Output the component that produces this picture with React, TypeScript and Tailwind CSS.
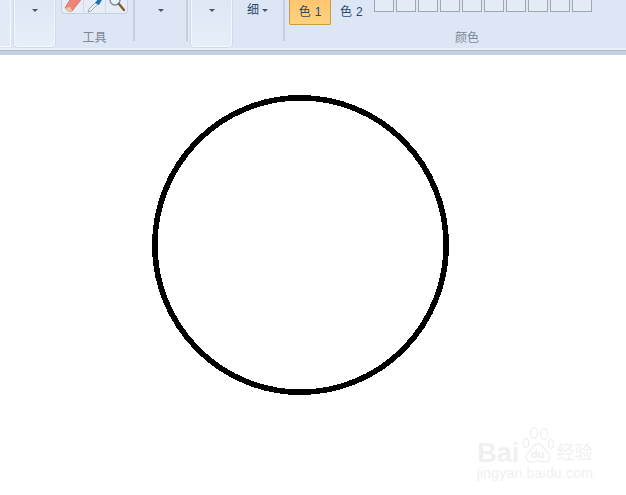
const swatches = [0, 1, 2, 3, 4, 5, 6, 7, 8, 9];

function Arrow() {
  return <span className="block h-0 w-0 border-x-[3px] border-t-[3px] border-x-transparent border-t-[#47566d]" />;
}

// big dropdown button, cut off by the top of the picture
function BigButton({ className }: { className: string }) {
  return (
    <div className={`flex h-[47px] shrink-0 justify-center rounded-b-sm border-x border-b border-[#f4f7fb] bg-gradient-to-b from-[#dde7f4] to-[#e6eef8] pt-[9px] shadow-[0_0_0_1px_#cfdaea] ${className}`}>
      <Arrow />
    </div>
  );
}

function Separator({ className }: { className: string }) {
  return <div className={`h-[41px] w-[2px] shrink-0 bg-[#c3cfdf] ${className}`} />;
}

function Eraser() {
  return (
    <svg width="18" height="13" viewBox="0 0 18 13" className="block">
      <path d="M1 8 L7 -2 L18 -2 L16 1 L8 11 L4 11 Z" fill="#f0837a" stroke="#c9695f" strokeWidth="0.8" />
      <path d="M1 8 L4 11 L8 11 L6 7 Z" fill="#f7c6a8" />
    </svg>
  );
}

function Dropper() {
  return (
    <svg width="18" height="13" viewBox="0 0 18 13" className="block">
      <path d="M2 12 L3 9 L10 2 L12 4 L5 11 Z" fill="#eef3f8" stroke="#8b97a5" strokeWidth="0.8" />
      <path d="M9 3 L13 -2 L17 -2 L13 5 Z" fill="#1f6fc0" />
    </svg>
  );
}

function Magnifier() {
  return (
    <svg width="18" height="13" viewBox="0 0 18 13" className="block">
      <circle cx="7" cy="0" r="5" fill="#e8f0f8" stroke="#7d8a99" strokeWidth="1.4" />
      <path d="M11 4 L16 10" stroke="#8a5a2b" strokeWidth="2.4" strokeLinecap="round" />
    </svg>
  );
}

function ToolsGroup() {
  return (
    <div className="ml-[6px] flex h-[48px] w-[67px] shrink-0 flex-col items-center">
      <div className="flex h-[14px] w-full rounded-b-sm border-x border-b border-[#c5d1e1] bg-[#e6edf7]">
        <div className="flex flex-1 justify-center border-r border-[#cfd9e7]"><Eraser /></div>
        <div className="flex flex-1 justify-center border-r border-[#cfd9e7]"><Dropper /></div>
        <div className="flex flex-1 justify-center"><Magnifier /></div>
      </div>
      <span className="mt-[17px] text-[12px] leading-[14px] text-[#7c8796]">工具</span>
    </div>
  );
}

function Ribbon() {
  return (
    <div className="flex h-[48px] shrink-0 items-start overflow-hidden bg-[#dce6f4] text-[12px] leading-[14px]">
      <div className="h-[47px] w-[11px] shrink-0 border-r border-b border-[#f4f7fb] bg-[#e1eaf6]" />
      <BigButton className="ml-[3px] w-[41px]" />
      <ToolsGroup />
      <Separator className="ml-[5px]" />
      <div className="flex w-[51px] shrink-0 justify-center pt-[9px]"><Arrow /></div>
      <Separator />
      <BigButton className="ml-[3px] w-[41px]" />
      <div className="ml-[15px] flex w-[25px] shrink-0 items-center gap-[3px] pt-[3px] text-[#2b4a6e]">
        <span>细</span>
        <Arrow />
      </div>
      <Separator className="ml-[11px]" />
      <div className="ml-[4px] flex h-[25px] w-[42px] shrink-0 items-center justify-center gap-[4px] rounded-b-[2px] border-x border-b border-[#c99a3c] bg-gradient-to-b from-[#ffc56e] to-[#ffd27e] pb-[1px] text-[#2b4a6e]">
        <span>色</span>
        <span>1</span>
      </div>
      <div className="ml-[9px] flex h-[25px] w-[24px] shrink-0 items-center gap-[4px] pb-[1px] text-[#2b4a6e]">
        <span>色</span>
        <span>2</span>
      </div>
      <div className="ml-[10px] flex w-[218px] shrink-0 flex-col">
        <div className="flex gap-[2px]">
          {swatches.map((s) => (
            <div key={s} className="h-[12px] w-[20px] border-x border-b border-[#a3a7ad] bg-[#e3ebf6]" />
          ))}
        </div>
        <span className="mt-[19px] ml-[81px] text-[12px] leading-[14px] text-[#7c8796]">颜色</span>
      </div>
    </div>
  );
}

function Watermark() {
  return (
    <div className="absolute right-[33px] bottom-[14px] flex flex-col items-center text-[#f0f0f0]">
      <div className="flex items-end">
        <span className="text-[27px] leading-[24px] font-bold">Bai</span>
        <svg width="34" height="38" viewBox="0 0 32 38" className="ml-[2px] block">
          <g fill="none" stroke="#efefef" strokeWidth="1.3">
            <ellipse cx="4" cy="16" rx="3" ry="4.5" />
            <ellipse cx="12" cy="6" rx="3.5" ry="5.5" />
            <ellipse cx="22" cy="7" rx="3.5" ry="5.5" />
            <ellipse cx="29" cy="17" rx="2.6" ry="4.5" />
            <path d="M16 17 C22 17 22 23 26 26 C30 30 27 36 21 35 C18 34 14 34 11 35 C5 36 2 30 6 26 C10 23 10 17 16 17 Z" />
          </g>
          <text x="9" y="31" fontSize="11" fontWeight="700" fill="#ededed" fontFamily="'Liberation Sans'">du</text>
        </svg>
        <span className="ml-px text-[18px] leading-[24px]">经验</span>
      </div>
      <span className="mt-[1px] text-[14px] leading-[15px] tracking-[0.2px]">jingyan.baidu.com</span>
    </div>
  );
}

export default function App() {
  return (
    <div className="flex h-[495px] w-[626px] flex-col overflow-hidden bg-white font-['Liberation_Sans','Noto_Sans_CJK_SC',sans-serif]">
      <Ribbon />
      <div className="h-[2px] shrink-0 bg-[#ecf1f9]" />
      <div className="h-[5px] shrink-0 border-t border-[#aebbcc] bg-[#c4cfe0]" />
      <div className="relative flex-1 pt-[40px] pl-[152px]">
        {/* the drawn circle, aliased like a paint canvas */}
        <svg width="297" height="300" viewBox="0 0 297 300" className="block" shapeRendering="crispEdges">
          <ellipse cx="148.5" cy="150" rx="145.7" ry="147.2" fill="none" stroke="#000" strokeWidth="5.6" />
        </svg>
        <Watermark />
      </div>
    </div>
  );
}
